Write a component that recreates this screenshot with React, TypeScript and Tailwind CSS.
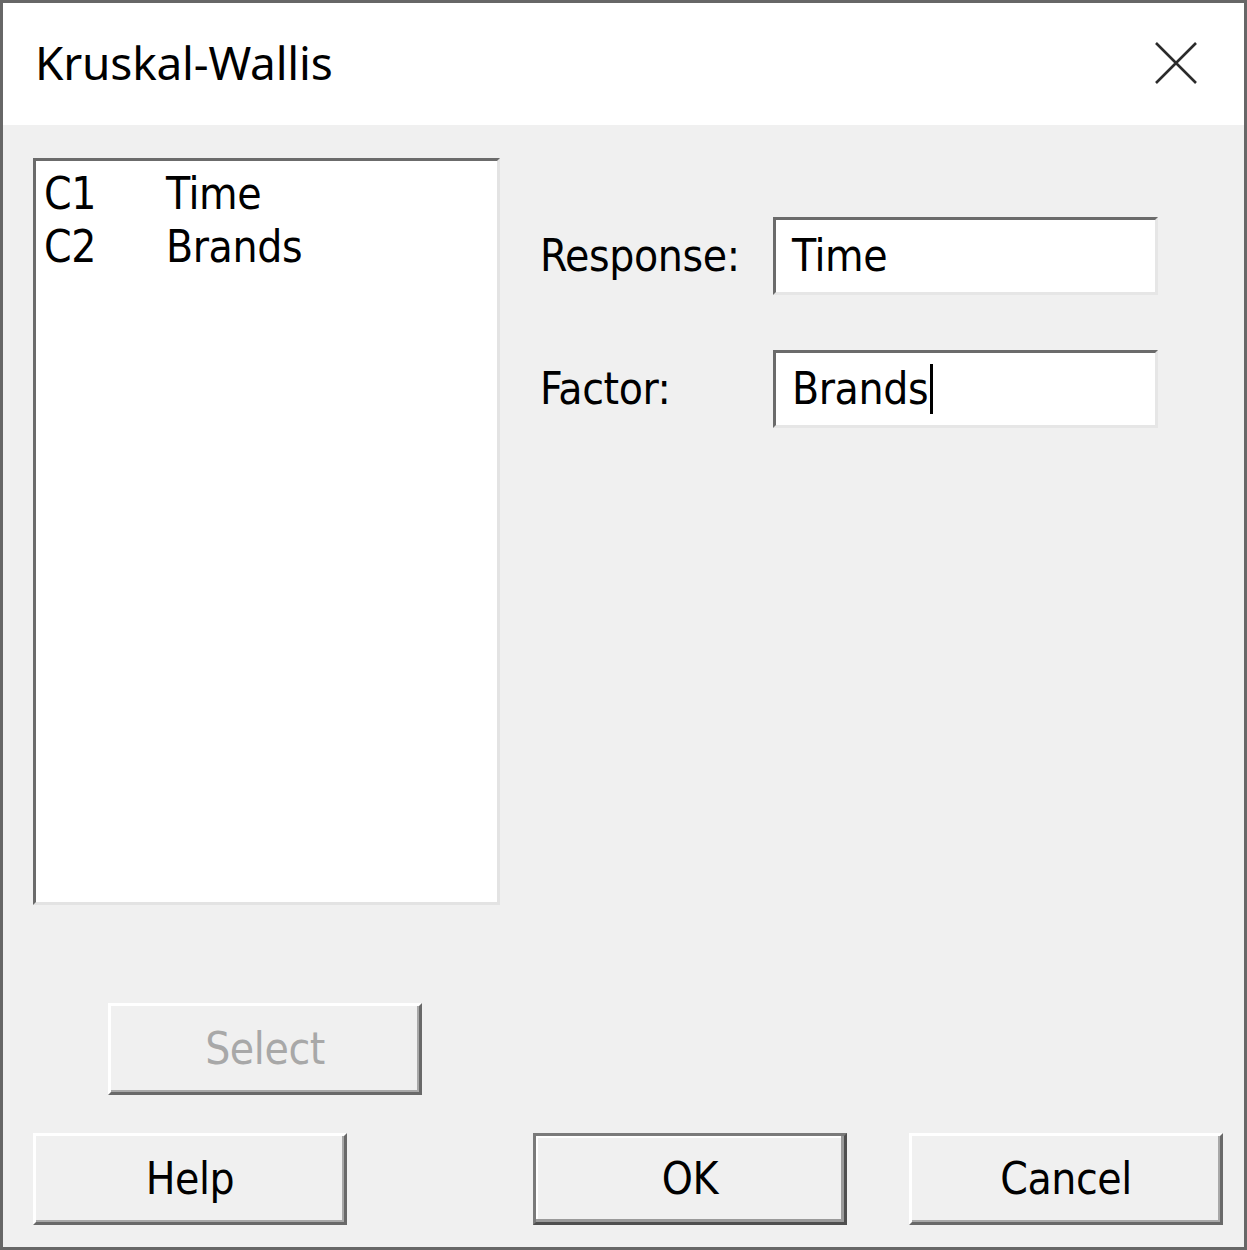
import type { ReactNode } from "react";

const TAHOMA = "font-['DejaVu_Sans','Liberation_Sans',sans-serif] [font-stretch:condensed] tracking-[-0.4px]";

function Button({
  children,
  primary = false,
  disabled = false,
  className = "",
}: {
  children: ReactNode;
  primary?: boolean;
  disabled?: boolean;
  className?: string;
}) {
  return (
    <button
      type="button"
      className={
        "flex h-[92px] w-[314px] items-center justify-center bg-[#f0f0f0] text-[44px] leading-none " +
        TAHOMA +
        " " +
        (primary
          ? "border-[3px] border-t-[#7a7a7a] border-l-[#7a7a7a] border-r-[#4f4f4f] border-b-[#4f4f4f] shadow-[inset_-3px_-3px_0_#9a9a9a,inset_2px_2px_0_#ffffff]"
          : "border-[3px] border-t-white border-l-white border-r-[#696969] border-b-[#696969] shadow-[inset_-2px_-2px_0_#a8a8a8]") +
        (disabled ? " text-[#a8a8a8]" : " text-black") +
        " " +
        className
      }
    >
      {children}
    </button>
  );
}

function Field({ value, caret = false }: { value: string; caret?: boolean }) {
  return (
    <div className="flex h-[78px] w-[385px] items-center border-[3px] border-t-[#6b6b6b] border-l-[#6b6b6b] border-r-[#e6e6e6] border-b-[#e6e6e6] bg-white pl-[16px]">
      <span className={"text-[44px] leading-none text-black " + TAHOMA}>{value}</span>
      {caret && <span className="ml-[2px] h-[50px] w-[3px] bg-black" />}
    </div>
  );
}

export default function App() {
  return (
    <div className="flex h-[1250px] w-[1247px] flex-col border-[3px] border-[#676767] bg-[#f0f0f0]">
      {/* title bar */}
      <div className="flex h-[122px] items-start justify-between bg-white pl-[32px] pr-[47px]">
        <h1 className="mt-[36px] font-['Noto_Sans',sans-serif] text-[46px] leading-none tracking-[-0.2px] text-black">
          Kruskal-Wallis
        </h1>
        <svg className="mt-[39px]" width="42" height="42" viewBox="0 0 42 42">
          <path d="M1 1 L41 41 M41 1 L1 41" stroke="#2b2b2b" strokeWidth="2.6" fill="none" />
        </svg>
      </div>

      {/* body */}
      <div className="flex flex-1 flex-col pl-[30px] pt-[33px]">
        <div className="flex">
          <div className="h-[747px] w-[467px] border-[3px] border-t-[#6b6b6b] border-l-[#6b6b6b] border-r-[#e3e3e3] border-b-[#e3e3e3] bg-white px-[8px] pt-[6px]">
            {[
              ["C1", "Time"],
              ["C2", "Brands"],
            ].map(([c, name]) => (
              <div key={c} className={"flex h-[53px] items-center text-[44px] leading-none text-black " + TAHOMA}>
                <span className="w-[122px]">{c}</span>
                <span>{name}</span>
              </div>
            ))}
          </div>

          <div className="ml-[40px] mt-[59px] flex flex-col gap-[55px]">
            <div className="flex items-center">
              <span className={"w-[233px] text-[44px] leading-none text-black " + TAHOMA}>Response:</span>
              <Field value="Time" />
            </div>
            <div className="flex items-center">
              <span className={"w-[233px] text-[44px] leading-none text-black " + TAHOMA}>Factor:</span>
              <Field value="Brands" caret />
            </div>
          </div>
        </div>

        <div className="ml-[75px] mt-[98px]">
          <Button disabled className="w-[313px]">
            Select
          </Button>
        </div>

        <div className="mt-[38px] flex">
          <Button>Help</Button>
          <Button primary className="ml-[186px]">
            OK
          </Button>
          <Button className="ml-[62px]">Cancel</Button>
        </div>
      </div>
    </div>
  );
}
